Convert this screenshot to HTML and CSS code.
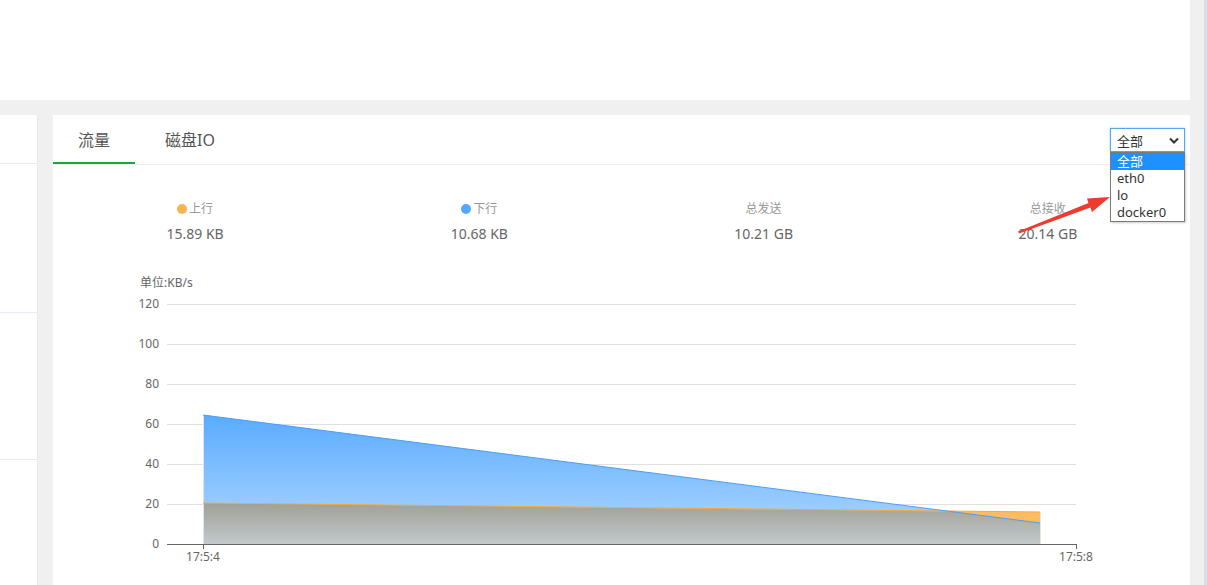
FILE: index.html
```html
<!DOCTYPE html>
<html lang="zh-CN">
<head>
    <meta charset="UTF-8">
    <title>监控</title>
    <link rel="stylesheet" href="styles.css">
</head>
<body>
    <div class="page">
        <div class="top-box"></div>

        <div class="content">
            <div class="side-panel">
                <div class="side-row first"></div>
                <div class="side-row second"></div>
                <div class="side-row third"></div>
            </div>

            <div class="main-panel">
                <div class="tabs">
                    <div class="tab active">流量</div>
                    <div class="tab">磁盘IO</div>
                </div>

                <div class="net-select">
                    <div class="select-box">
                        <span>全部</span>
                        <svg class="chevron" width="10" height="7" viewBox="0 0 10 7">
                            <path d="M1 1.5 L5 5.5 L9 1.5" fill="none" stroke="#333" stroke-width="2"/>
                        </svg>
                    </div>
                    <ul class="select-list">
                        <li class="selected">全部</li>
                        <li>eth0</li>
                        <li>lo</li>
                        <li>docker0</li>
                    </ul>
                </div>

                <svg class="arrow" width="100" height="45" viewBox="1015 190 100 45">
                    <polygon points="1018,231.5 1019,233.5 1090.5,207.5 1092,212 1110,197 1087,198.5 1088.5,203" fill="#ee3a2f"/>
                </svg>

                <div class="stats">
                    <div class="stat">
                        <div class="stat-label"><i class="dot up"></i>上行</div>
                        <div class="stat-value">15.89 KB</div>
                    </div>
                    <div class="stat">
                        <div class="stat-label"><i class="dot down"></i>下行</div>
                        <div class="stat-value">10.68 KB</div>
                    </div>
                    <div class="stat">
                        <div class="stat-label">总发送</div>
                        <div class="stat-value">10.21 GB</div>
                    </div>
                    <div class="stat">
                        <div class="stat-label">总接收</div>
                        <div class="stat-value">20.14 GB</div>
                    </div>
                </div>

                <svg class="chart" width="1137" height="315" viewBox="53 270 1137 315">
                    <defs>
                        <linearGradient id="blueFill" gradientUnits="userSpaceOnUse" x1="0" y1="415" x2="0" y2="544">
                            <stop offset="0" stop-color="#5aabff"/>
                            <stop offset="1" stop-color="#b3d9ff"/>
                        </linearGradient>
                        <linearGradient id="grayFill" gradientUnits="userSpaceOnUse" x1="0" y1="503" x2="0" y2="544">
                            <stop offset="0" stop-color="#a0a096"/>
                            <stop offset="1" stop-color="#c3c9ca"/>
                        </linearGradient>
                    </defs>

                    <text class="unit" x="140" y="287">单位:KB/s</text>

                    <g class="grid">
                        <line x1="167" y1="304.5" x2="1076" y2="304.5"/>
                        <line x1="167" y1="344.5" x2="1076" y2="344.5"/>
                        <line x1="167" y1="384.5" x2="1076" y2="384.5"/>
                        <line x1="167" y1="424.5" x2="1076" y2="424.5"/>
                        <line x1="167" y1="464.5" x2="1076" y2="464.5"/>
                        <line x1="167" y1="504.5" x2="1076" y2="504.5"/>
                    </g>

                    <g class="y-labels">
                        <text x="159" y="308">120</text>
                        <text x="159" y="348">100</text>
                        <text x="159" y="388">80</text>
                        <text x="159" y="428">60</text>
                        <text x="159" y="468">40</text>
                        <text x="159" y="508">20</text>
                        <text x="159" y="548">0</text>
                    </g>

                    <polygon points="203,503 1040,512 1040,544 203,544" fill="#fdbb62"/>
                    <polygon points="203,415 1040,523 1040,544 203,544" fill="url(#blueFill)"/>
                    <polygon points="203,503 951,511.5 1040,523 1040,544 203,544" fill="url(#grayFill)"/>
                    <line x1="203.5" y1="415" x2="203.5" y2="544" stroke="#d8e6f5" stroke-width="1"/>
                    <line x1="1040.5" y1="512" x2="1040.5" y2="544" stroke="#eee6d8" stroke-width="1"/>
                    <polyline points="203,503 1040,512" fill="none" stroke="#f6a83c" stroke-width="1"/>
                    <polyline points="203,415 1040,523" fill="none" stroke="#4a9ff5" stroke-width="1"/>

                    <g class="axis">
                        <line x1="167" y1="544.5" x2="1076" y2="544.5"/>
                        <line x1="203.5" y1="544" x2="203.5" y2="549"/>
                        <line x1="1076.5" y1="544" x2="1076.5" y2="549"/>
                    </g>

                    <g class="x-labels">
                        <text x="203" y="561">17:5:4</text>
                        <text x="1076" y="561">17:5:8</text>
                    </g>
                </svg>
            </div>
        </div>
    </div>
    <div class="scrollbar"></div>
</body>
</html>
```

FILE: styles.css
```css
body {
    margin: 0;
    padding: 0;
    height: 585px;
    overflow: hidden;
    background: #f0f0f0;
    font-family: "Noto Sans", "Noto Sans CJK SC", sans-serif;
    display: flex;
}

.page {
    width: 1190px;
}

.scrollbar {
    margin-left: auto;
    width: 3px;
    height: 100vh;
    background: #dcdee6;
}

.top-box {
    height: 100px;
    background: #fff;
}

.content {
    display: flex;
    gap: 15px;
    margin-top: 15px;
    height: 470px;
}

.side-panel {
    width: 37px;
    background: #fff;
    border-right: 1px solid #ebe8f7;
}

.side-row {
    border-bottom: 1px solid #ebe8f5;
}

.side-row.first {
    height: 48px;
}

.side-row.second {
    height: 148px;
}

.side-row.third {
    height: 146px;
}

.main-panel {
    flex: 1;
    background: #fff;
    position: relative;
}

/* tabs */
.tabs {
    display: flex;
    gap: 5px;
    height: 49px;
    border-bottom: 1px solid #eee;
}

.tab {
    padding: 3px 25px 0;
    font-size: 16px;
    line-height: 44px;
    color: #555;
    border-bottom: 2px solid transparent;
}

.tab.active {
    border-bottom-color: #20a53a;
}

/* select */
.net-select {
    position: absolute;
    top: 13px;
    right: 5px;
    width: 75px;
    font-size: 13px;
    color: #333;
}

.select-box {
    height: 22px;
    border: 1px solid #5aa6ee;
    box-shadow: 0 0 2px rgba(90, 166, 238, 0.6);
    display: flex;
    align-items: center;
    justify-content: space-between;
    padding: 0 5px 0 6px;
}

.select-list {
    list-style: none;
    margin: 0;
    padding: 0;
    background: #fff;
    border: 1px solid #7a7a7a;
    box-shadow: 1px 1px 2px rgba(0, 0, 0, 0.2);
}

.select-list li {
    height: 17px;
    line-height: 17px;
    padding: 0 6px;
}

.select-list li.selected {
    background: #1e90ff;
    color: #fff;
}

.arrow {
    position: absolute;
    left: 962px;
    top: 75px;
}

/* stats */
.stats {
    display: grid;
    grid-template-columns: repeat(4, 1fr);
    padding-top: 34px;
    text-align: center;
}

.stat-label {
    font-size: 12px;
    line-height: 20px;
    color: #999;
    display: flex;
    align-items: center;
    justify-content: center;
}

.dot {
    display: inline-block;
    width: 10px;
    height: 10px;
    border-radius: 50%;
    margin-right: 2px;
}

.dot.up {
    background: #f7b54f;
}

.dot.down {
    background: #52a8ff;
}

.stat-value {
    font-size: 14px;
    line-height: 20px;
    margin-top: 5px;
    color: #666;
}

/* chart */
.chart {
    display: block;
    margin-top: 26px;
    font-family: "Noto Sans", "Noto Sans CJK SC", sans-serif;
}

.chart text {
    font-size: 12px;
    fill: #666;
}

.grid line {
    stroke: #e0e0e0;
    stroke-width: 1;
}

.y-labels text {
    text-anchor: end;
}

.x-labels text {
    text-anchor: middle;
}

.axis line {
    stroke: #666;
    stroke-width: 1;
}
```
